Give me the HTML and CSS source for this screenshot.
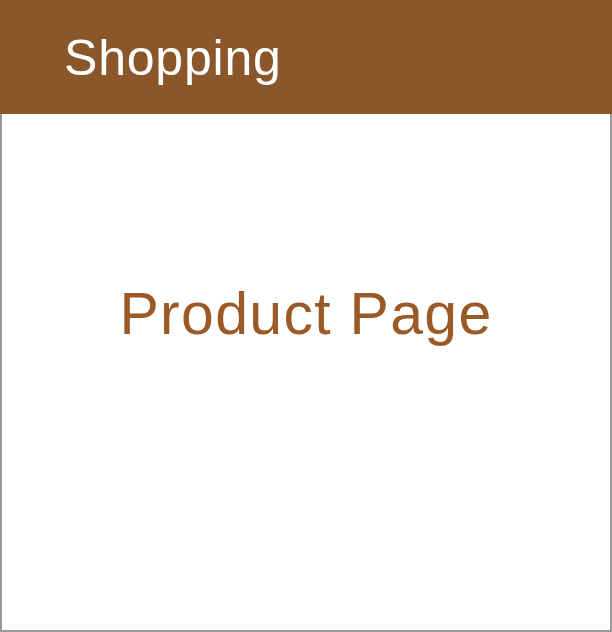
FILE: index.html
```html
<!DOCTYPE html>
<html>
<head>
<meta charset="utf-8">
<link rel="stylesheet" href="styles.css">
</head>
<body>
<div class="app">
  <header class="header"><h1 class="title">Shopping</h1></header>
  <main class="content"><h2 class="page-title">Product Page</h2></main>
</div>
</body>
</html>
```
FILE: styles.css
```css
html, body { margin: 0; padding: 0; }
body { font-family: "Liberation Sans", Arial, sans-serif; background: #fff; }
.app { width: 612px; height: 632px; display: flex; flex-direction: column; }
.header { height: 114px; background: #8b572a; display: flex; align-items: center; padding-left: 64px; box-sizing: border-box; }
.title { margin: 0; color: #fff; font-weight: 400; font-size: 50px; line-height: 1; padding-top: 2px; letter-spacing: 0.8px; }
.content { flex: 1; border: 2px solid #999; border-top: 0; display: flex; justify-content: center; padding-top: 171px; box-sizing: border-box; }
.page-title { margin: 0; color: #9b5a25; font-weight: 400; font-size: 59px; line-height: 1; letter-spacing: 1.3px; }
```
